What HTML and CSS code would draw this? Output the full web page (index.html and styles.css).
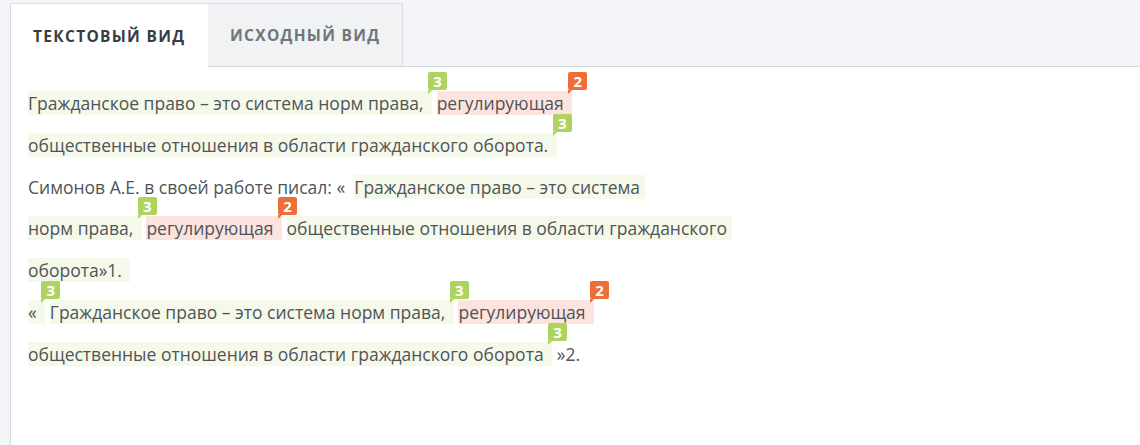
FILE: index.html
```html
<!DOCTYPE html>
<html lang="ru">
<head>
<meta charset="utf-8">
<title>Текстовый вид</title>
<link rel="stylesheet" href="styles.css">
</head>
<body>
<div class="panel">
  <div class="tabs">
    <div class="tab active">Текстовый вид</div>
    <div class="tab">Исходный вид</div>
  </div>
  <div class="content">
    <p class="text"><span class="frag g">Гражданское право – это система норм права,&nbsp;<i class="pin"><b class="badge g">3</b></i></span> <span class="frag p">регулирующая&nbsp;<i class="pin"><b class="badge o">2</b></i></span><br><span class="frag g">общественные отношения в области гражданского оборота.&nbsp;<i class="pin"><b class="badge g">3</b></i></span><br>Симонов А.Е. в своей работе писал: «&nbsp; <span class="frag g">Гражданское право – это система&nbsp;<br>норм права,&nbsp;<i class="pin"><b class="badge g">3</b></i></span> <span class="frag p">регулирующая&nbsp;<i class="pin"><b class="badge o">2</b></i></span> <span class="frag g">общественные отношения в области гражданского&nbsp;<br>оборота»1.&nbsp;</span><br><span class="frag g">«&nbsp;<i class="pin"><b class="badge g">3</b></i></span> <span class="frag g">Гражданское право – это система норм права,&nbsp;<i class="pin"><b class="badge g">3</b></i></span> <span class="frag p">регулирующая&nbsp;<i class="pin"><b class="badge o">2</b></i></span><br><span class="frag g">общественные отношения в области гражданского оборота&nbsp;<i class="pin"><b class="badge g">3</b></i></span> »2.</p>
  </div>
</div>
</body>
</html>
```

FILE: styles.css
```css
html, body {
  margin: 0;
  height: 100%;
}
body {
  background: #f3f5f8;
  font-family: "Open Sans", "Noto Sans", sans-serif;
  padding: 3px 0 0 10px;
  box-sizing: border-box;
}
.panel {
  display: flex;
  flex-direction: column;
  height: 100%;
  border-left: 1px solid #d9dcdf;
}
.tabs {
  display: flex;
  height: 63px;
  border-bottom: 1px solid #d6d9dc;
  flex: none;
}
.tab {
  display: flex;
  align-items: center;
  padding: 0 22px;
  height: 63px;
  box-sizing: border-box;
  background: #f0f2f4;
  border: 1px solid #dcdfe2;
  border-bottom: none;
  border-left: none;
  font-size: 15.5px;
  font-weight: 700;
  letter-spacing: 1.3px;
  text-transform: uppercase;
  color: #6f767c;
}
.tab.active {
  background: #fff;
  color: #373d43;
  height: 64px;
  margin-bottom: -1px;
  border-right: none;
  width: 197px;
}
.content {
  flex: 1;
  background: #fff;
  padding: 16px 17px 15px;
}
.text {
  margin: 0;
  font-size: 17.5px;
  line-height: 41.8px;
  color: #4f5459;
}
.frag {
  padding: 0 4px 0 0;
}
.frag.g {
  background: #f5f9ea;
}
.frag.p {
  background: #fde3dd;
}
.pin {
  display: inline-block;
  position: relative;
  width: 0;
  height: 0;
  vertical-align: baseline;
  font-style: normal;
}
.badge {
  position: absolute;
  left: 0;
  bottom: 20px;
  width: 19px;
  height: 18px;
  border-radius: 2px;
  color: #fff;
  font-size: 15px;
  font-weight: 700;
  line-height: 18px;
  text-align: center;
}
.badge::after {
  content: "";
  position: absolute;
  left: 0;
  top: 100%;
  border-top: 4px solid currentColor;
  border-right: 4px solid transparent;
}
.badge.g {
  background: #afd35f;
}
.badge.g::after {
  border-top-color: #afd35f;
}
.badge.o {
  background: #ef6d37;
}
.badge.o::after {
  border-top-color: #ef6d37;
}
```
